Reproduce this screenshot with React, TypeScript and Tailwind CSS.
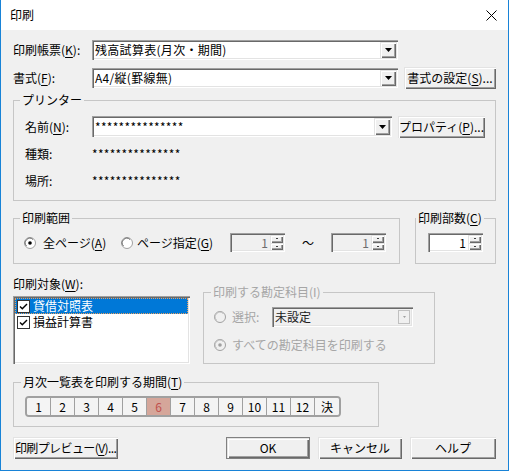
import type { ReactNode } from 'react';

const SUNKEN =
  'shadow-[inset_1px_1px_0_#a0a0a0,inset_2px_2px_0_#696969,inset_-1px_-1px_0_#ffffff,inset_-2px_-2px_0_#e3e3e3]';
const RAISED =
  'shadow-[inset_1px_1px_0_#e3e3e3,inset_2px_2px_0_#ffffff,inset_-1px_-1px_0_#696969,inset_-2px_-2px_0_#a0a0a0]';

function U({ children }: { children: ReactNode }) {
  return <span className="underline underline-offset-2">{children}</span>;
}

function Arrow({ color = '#000' }: { color?: string }) {
  return (
    <svg width="7" height="4" viewBox="0 0 7 4">
      <polygon points="0,0 7,0 3.5,4" fill={color} />
    </svg>
  );
}

function Combo({ text, w, h }: { text: string; w: string; h: string }) {
  return (
    <div className={`${w} ${h} ${SUNKEN} bg-white p-[2px] flex`}>
      <div className="flex-1 pl-[1px] leading-[16px] flex items-center tracking-[0.3px]">{text}</div>
      <div className={`w-[16px] h-full ${RAISED} bg-[#f0f0f0] flex items-center justify-center`}>
        <Arrow />
      </div>
    </div>
  );
}

function Button({ children, w, def = false }: { children: ReactNode; w: string; def?: boolean }) {
  return (
    <div
      className={`${w} h-[22px] ${RAISED} bg-[#f0f0f0] flex items-center justify-center whitespace-nowrap ${
        def ? 'border border-[#808080]' : ''
      }`}
    >
      {children}
    </div>
  );
}

function Radio({ checked, disabled = false }: { checked: boolean; disabled?: boolean }) {
  return (
    <svg width="12" height="12" viewBox="0 0 12 12" className="shrink-0">
      <circle cx="6" cy="6" r="5.5" fill={disabled ? '#f0f0f0' : '#ffffff'} stroke="#a0a0a0" />
      <path d="M2.5 9 A4.6 4.6 0 0 1 9 2.5" fill="none" stroke={disabled ? '#c0c0c0' : '#696969'} />
      {checked && <circle cx="6" cy="6" r="1.8" fill={disabled ? '#a0a0a0' : '#000'} />}
    </svg>
  );
}

function Spin({ bg, color }: { bg: string; color: string }) {
  return (
    <div className={`w-[55px] h-[19px] ${SUNKEN} ${bg} p-[2px] flex`}>
      <div className={`flex-1 text-right pr-[2px] leading-[15px] ${color}`}>1</div>
      <div className="w-[13px] flex flex-col">
        <div className={`flex-1 ${RAISED} bg-[#f0f0f0] flex items-center justify-center`}>
          <div className="w-[2px] h-[1px] bg-[#404040]" />
        </div>
        <div className={`flex-1 ${RAISED} bg-[#f0f0f0] flex items-center justify-center`}>
          <div className="w-[2px] h-[1px] bg-[#404040]" />
        </div>
      </div>
    </div>
  );
}

function Check() {
  return (
    <svg width="13" height="13" viewBox="0 0 13 13" className="shrink-0">
      <rect x="0.5" y="0.5" width="12" height="12" fill="#fff" stroke="#333" />
      <path d="M3 6.5 L5.3 8.8 L10 4" fill="none" stroke="#000" strokeWidth="1.4" />
    </svg>
  );
}

function Legend({ children, left, gray = false }: { children: ReactNode; left: string; gray?: boolean }) {
  return (
    <span
      className={`absolute top-[-9px] ${left} px-[2px] bg-[#f0f0f0] leading-[16px] whitespace-nowrap ${
        gray ? 'text-[#a6a6a6]' : ''
      }`}
    >
      {children}
    </span>
  );
}

const months = ['1', '2', '3', '4', '5', '6', '7', '8', '9', '10', '11', '12', '決'];

export default function App() {
  return (
    <div className="w-[509px] h-[471px] bg-[#f0f0f0] border-x border-b border-[#1883d7] flex flex-col text-[12px] text-black font-['Noto_Sans_CJK_JP',sans-serif]">
      {/* title bar */}
      <div className="h-[30px] bg-white flex items-center justify-between pl-[9px] pr-[11px]">
        <span>印刷</span>
        <svg width="11" height="11" viewBox="0 0 11 11">
          <path d="M0.5 0.5 L10.5 10.5 M10.5 0.5 L0.5 10.5" stroke="#000" strokeWidth="1" />
        </svg>
      </div>

      <div className="flex flex-col px-3">
        <div className="mt-[10px] h-[20px] flex items-center">
          <span className="w-[79px]">
            印刷帳票(<U>K</U>):
          </span>
          <Combo text="残高試算表(月次・期間)" w="w-[306px]" h="h-[20px]" />
        </div>

        <div className="mt-[7px] h-[21px] flex items-center">
          <span className="w-[79px]">
            書式(<U>F</U>):
          </span>
          <Combo text="A4/縦(罫線無)" w="w-[306px]" h="h-[20px]" />
          <div className="ml-[6px]">
            <Button w="w-[92px]">
              書式の設定(<U>S</U>)...
            </Button>
          </div>
        </div>

        {/* printer */}
        <div className="mt-[12px] h-[101px] relative border border-[#c6c6c6] pt-[12px] pl-[11px]">
          <Legend left="left-[6px]">プリンター</Legend>
          <div className="h-[27px] flex items-center">
            <span className="w-[67px]">
              名前(<U>N</U>):
            </span>
            <Combo text="***************" w="w-[300px]" h="h-[21px]" />
            <div className="ml-[6px]">
              <Button w="w-[87px]">
                プロパティ(<U>P</U>)...
              </Button>
            </div>
          </div>
          <div className="h-[27px] flex items-center">
            <span className="w-[67px]">種類:</span>
            <span className="tracking-[0.3px]">***************</span>
          </div>
          <div className="h-[27px] flex items-center">
            <span className="w-[67px]">場所:</span>
            <span className="tracking-[0.3px]">***************</span>
          </div>
        </div>

        {/* range + copies */}
        <div className="mt-[17px] flex">
          <div className="w-[387px] h-[46px] relative border border-[#c6c6c6] pt-[14px] pl-[10px]">
            <Legend left="left-[6px]">印刷範囲</Legend>
            <div className="h-[19px] flex items-center">
              <div className="w-[97px] flex items-center gap-[7px]">
                <Radio checked />
                <span>
                  全ページ(<U>A</U>)
                </span>
              </div>
              <div className="w-[109px] flex items-center gap-[4px]">
                <Radio checked={false} />
                <span>
                  ページ指定(<U>G</U>)
                </span>
              </div>
              <Spin bg="bg-[#f0f0f0]" color="text-[#6d6d6d]" />
              <div className="w-[46px] text-center">～</div>
              <Spin bg="bg-[#f0f0f0]" color="text-[#6d6d6d]" />
            </div>
          </div>
          <div className="ml-[15px] w-[81px] h-[46px] relative border border-[#c6c6c6] pt-[14px] pl-[12px]">
            <Legend left="left-[0px]">
              印刷部数(<U>C</U>)
            </Legend>
            <Spin bg="bg-white" color="text-black" />
          </div>
        </div>

        {/* target */}
        <div className="mt-[12px] flex items-start">
          <div className="w-[177px] flex flex-col">
            <span className="h-[16px] leading-[16px]">
              印刷対象(<U>W</U>):
            </span>
            <div className={`mt-[4px] h-[68px] ${SUNKEN} bg-white p-[2px]`}>
              <div className="h-[16px] bg-[#0078d7] text-white flex items-center pl-[2px] gap-[3px] outline-1 outline-dotted outline-[#e8a060] -outline-offset-1">
                <Check />
                <span>貸借対照表</span>
              </div>
              <div className="h-[16px] flex items-center pl-[2px] gap-[3px]">
                <Check />
                <span>損益計算書</span>
              </div>
            </div>
          </div>
          <div className="ml-[13px] mt-[16px] w-[232px] h-[72px] relative border border-[#c6c6c6] pt-[14px] pl-[10px] text-[#a6a6a6]">
            <Legend left="left-[7px]" gray>
              印刷する勘定科目(I)
            </Legend>
            <div className="h-[20px] flex items-center">
              <Radio checked={false} disabled />
              <span className="ml-[6px] w-[40px]">選択:</span>
              <div className={`w-[141px] h-[20px] ${SUNKEN} bg-[#f0f0f0] p-[2px] flex`}>
                <div className="flex-1 pl-[1px] leading-[16px] text-[#202020]">未設定</div>
                <div className="w-[12px] mr-[1px] my-[1px] border border-[#c0c0c0] bg-[#f0f0f0] flex items-center justify-center">
                  <svg width="3" height="2" viewBox="0 0 3 2">
                    <polygon points="0,0 3,0 1.5,2" fill="#a0a0a0" />
                  </svg>
                </div>
              </div>
            </div>
            <div className="mt-[8px] h-[20px] flex items-center">
              <Radio checked disabled />
              <span className="ml-[6px]">すべての勘定科目を印刷する</span>
            </div>
          </div>
        </div>

        {/* month period */}
        <div className="mt-[18px] w-[366px] h-[45px] relative border border-[#c6c6c6] pt-[13px] pl-[11px]">
          <Legend left="left-[7px]">
            月次一覧表を印刷する期間(<U>T</U>)
          </Legend>
          <div className="w-[316px] h-[21px] border-2 border-[#a0a0a0] rounded-[4px] flex overflow-hidden">
            {months.map((m, i) => (
              <div
                key={m}
                className={`w-[24px] h-full flex items-center justify-center ${
                  i < months.length - 1 ? 'border-r border-[#a0a0a0]' : ''
                } ${m === '6' ? 'bg-[#d5a69a] text-[#c0504d]' : 'bg-[#f4f4f4]'}`}
              >
                {m}
              </div>
            ))}
          </div>
        </div>

        {/* buttons */}
        <div className="mt-[10px] flex">
          <Button w="w-[105px]">
            <span className="tracking-[-0.6px]">
              印刷プレビュー(<U>V</U>)...
            </span>
          </Button>
          <div className="ml-auto flex gap-[8px]">
            <Button w="w-[84px]" def>
              OK
            </Button>
            <Button w="w-[84px]">キャンセル</Button>
            <Button w="w-[86px]">ヘルプ</Button>
          </div>
        </div>
      </div>
    </div>
  );
}
